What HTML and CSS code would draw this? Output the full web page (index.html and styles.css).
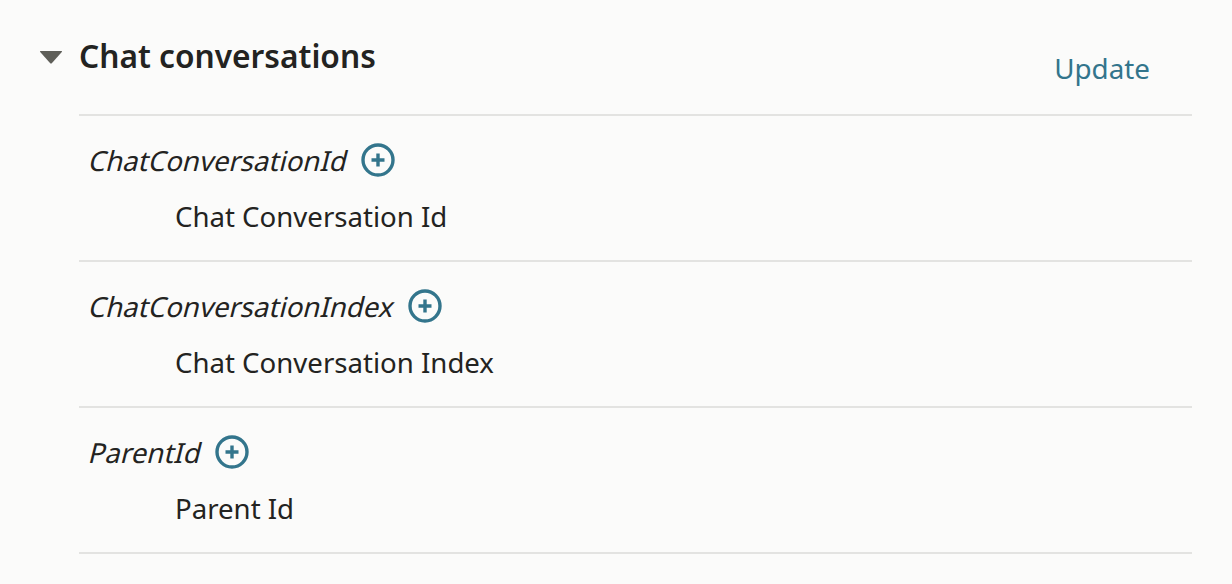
FILE: index.html
```html
<!DOCTYPE html>
<html>
  <head>
    <title>Chat conversations</title>
    <link rel="stylesheet" href="styles.css">
  </head>
  <body>
    <div class="section">
      <div class="toggle">
        <svg class="caret" width="24" height="14" viewBox="0 0 24 14"><path d="M1.5 1h21q1 0 .3 1L13 13q-1 1-2 0L1.2 2q-.7-1 .3-1z"/></svg>
      </div>
      <div class="content">
        <div class="header">
          <h2 class="title">Chat conversations</h2>
          <a class="update" href="#">Update</a>
        </div>
        <div class="field">
          <div class="name"><span class="slant">ChatConversationId</span>
            <svg class="plus" width="34" height="34" viewBox="0 0 34 34"><circle cx="17" cy="17" r="15"/><path d="M17 10.5v13M10.5 17h13"/></svg>
          </div>
          <div class="desc">Chat Conversation Id</div>
        </div>
        <div class="field">
          <div class="name"><span class="slant">ChatConversationIndex</span>
            <svg class="plus" width="34" height="34" viewBox="0 0 34 34"><circle cx="17" cy="17" r="15"/><path d="M17 10.5v13M10.5 17h13"/></svg>
          </div>
          <div class="desc">Chat Conversation Index</div>
        </div>
        <div class="field">
          <div class="name"><span class="slant">ParentId</span>
            <svg class="plus" width="34" height="34" viewBox="0 0 34 34"><circle cx="17" cy="17" r="15"/><path d="M17 10.5v13M10.5 17h13"/></svg>
          </div>
          <div class="desc">Parent Id</div>
        </div>
      </div>
    </div>
  </body>
</html>
```

FILE: styles.css
```css
html, body {
  height: 100%;
}
body {
  margin: 0;
  background-color: #fbfbfa;
  color: #232321;
  font-family: "Noto Sans", sans-serif;
  overflow: hidden;
}
.section {
  display: flex;
  padding: 0 40px 0 39px;
}
.toggle {
  width: 40px;
  padding-top: 50px;
}
.caret {
  display: block;
}
.caret path {
  fill: #5f5f59;
}
.content {
  flex: 1;
}
.header {
  height: 114px;
  border-bottom: 2px solid #e3e3e1;
  display: flex;
  justify-content: space-between;
}
.title {
  margin: 34px 0 0 0;
  font-size: 31.7px;
  line-height: 43px;
  font-weight: 600;
}
.update {
  margin: 50px 42px 0 0;
  font-size: 27.8px;
  line-height: 37px;
  color: #33758c;
  text-decoration: none;
}
.field {
  height: 144px;
  border-bottom: 2px solid #e3e3e1;
  padding-left: 11px;
}
.name {
  display: flex;
  align-items: center;
  gap: 13px;
  padding-top: 27px;
  height: 34px;
  font-size: 27.6px;
}
.slant {
  display: inline-block;
  transform: skewX(-14deg);
}
.plus circle {
  fill: none;
  stroke: #33758c;
  stroke-width: 3.4;
}
.plus path {
  fill: none;
  stroke: #33758c;
  stroke-width: 3.4;
}
.desc {
  margin-top: 21px;
  padding-left: 85px;
  font-size: 27.6px;
  line-height: 37px;
}
```
